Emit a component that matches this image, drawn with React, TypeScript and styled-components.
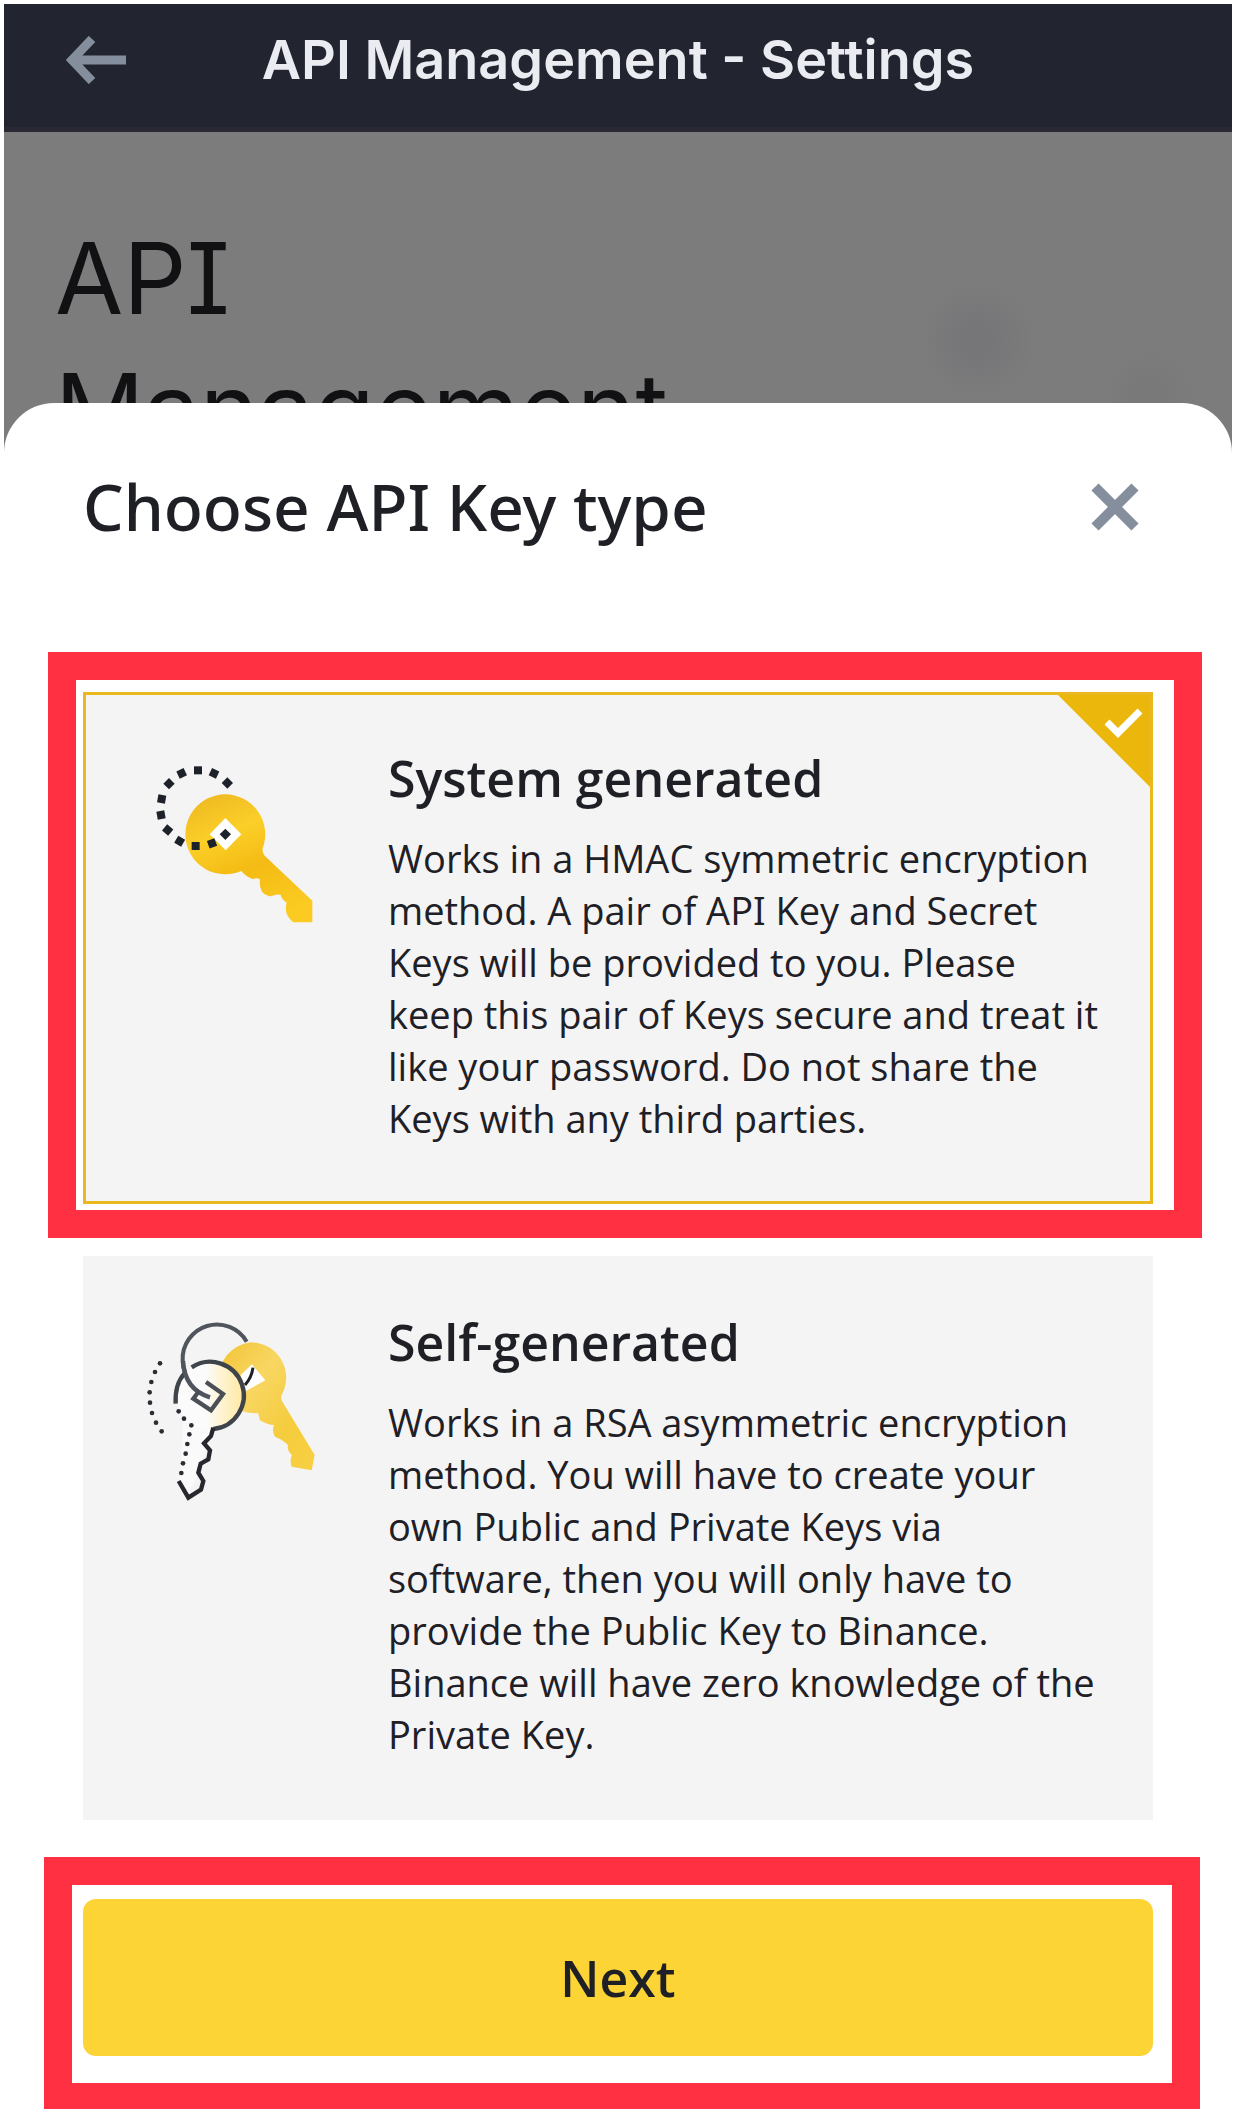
import React, { useState } from "react";
import styled, { createGlobalStyle } from "styled-components";

const GlobalStyle = createGlobalStyle`
  *, *::before, *::after { box-sizing: border-box; }
  body {
    margin: 0;
    background: #fff;
    color: #1e2026;
    font-family: "Open Sans", "Noto Sans", sans-serif;
    /* upper-case I with serifs, two-storey g */
    font-feature-settings: "ss03" 1;
  }
  h1, h2, h3, p { margin: 0; }
  button { border: 0; padding: 0; background: none; font: inherit; color: inherit; cursor: pointer; }
`;

const Page = styled.div`
  display: flex;
  flex-direction: column;
  padding: 4px;
`;

const Header = styled.header`
  display: grid;
  grid-template-columns: 1fr auto 1fr;
  align-items: center;
  height: 128px;
  padding: 0 60px 12px;
  background: #222530;
  border-bottom: 5px solid #2a2833;
`;

const HeaderTitle = styled.h1`
  font: 600 54px/64px Inter, sans-serif;
  font-feature-settings: normal;
  color: #eaecf2;
`;

const IconButton = styled.button`
  display: flex;
  justify-self: start;
  svg { display: block; }
`;

const Backdrop = styled.section`
  padding: 81px 51px 0;
  background:
    radial-gradient(circle 60px at calc(100% - 254px) 208px, #767679 20%, transparent),
    radial-gradient(circle 48px at calc(100% - 82px) 262px, #79797a 30%, transparent),
    #7c7c7c;
`;

const BackdropTitle = styled.h2`
  max-width: 640px;
  font-family: Inter, sans-serif;
  font-feature-settings: "cv08" 1;
  font-size: 99px;
  font-weight: 400;
  line-height: 131px;
  color: #111114;
`;

const Sheet = styled.form`
  position: relative;
  display: flex;
  flex-direction: column;
  margin-top: -72px;
  padding-top: 62px;
  border-radius: 50px 50px 0 0;
  background: #fff;
`;

const SheetHead = styled.div`
  display: flex;
  align-items: center;
  justify-content: space-between;
  margin-bottom: 103px;
  padding: 0 93px 0 79px;
`;

const SheetTitle = styled.h2`
  font-family: "Noto Sans", sans-serif;
  font-size: 64px;
  font-weight: 500;
  line-height: 84px;
`;

const Options = styled.div`
  display: flex;
  flex-direction: column;
  gap: 18px;
  margin-bottom: 37px;
`;

const Marked = styled.div`
  margin: 0 30px 0 44px;
  padding: 12px 21px 6px 7px;
  border: 28px solid #ff3042;
`;

const MarkedAction = styled(Marked)`
  margin: 0 32px 0 40px;
  padding: 14px 19px 27px 11px;
  border-bottom-width: 26px;
`;

const Plain = styled.div`
  margin: 0 79px;
`;

const Card = styled.label<{ $selected: boolean }>`
  position: relative;
  display: grid;
  grid-template-columns: 200px 1fr;
  column-gap: 58px;
  align-items: start;
  padding: 51px 52px 57px 44px;
  border: 3px solid ${(p) => (p.$selected ? "#eab920" : "#f4f4f4")};
  background: #f4f4f4;
  cursor: pointer;
`;

const CardArt = styled.svg`
  display: block;
  width: 200px;
  height: 200px;
`;

const CardBody = styled.span`
  display: flex;
  flex-direction: column;
  gap: 22px;
`;

const CardTitle = styled.span`
  font-size: 50px;
  font-weight: 600;
  line-height: 64px;
`;

const CardText = styled.span`
  font-size: 38px;
  line-height: 52px;
`;

const HiddenRadio = styled.input`
  position: absolute;
  width: 1px;
  height: 1px;
  margin: 0;
  opacity: 0;
`;

const Corner = styled.svg`
  position: absolute;
  top: 0;
  right: 0;
  width: 92px;
  height: 92px;
`;

const NextButton = styled.button`
  display: block;
  width: 100%;
  height: 157px;
  border-radius: 13px;
  background: #fcd436;
  font-size: 50px;
  font-weight: 600;
  line-height: 64px;
`;

const DOTS_ORBIT = [
  [292, 129, 45], [252, 100, 25], [204, 91, 0], [155, 100, -25], [117, 131, 45], [95, 177, 10],
  [93, 225, -10], [113, 270, 40], [149, 304, 30], [197, 318, 0], [246, 310, -20], [286, 283, 45],
];

const DOTS_TRAIL = [
  [90, 187], [75, 213], [64, 243], [59, 274], [60, 305], [66, 336], [78, 365], [95, 391],
  [146, 331], [162, 353], [184, 373], [178, 400], [172, 429], [167, 458], [159, 487], [154, 516],
];

const SystemKey = () => (
  <CardArt viewBox="0 18 600 600" aria-hidden="true">
    <defs>
      <linearGradient id="gold" x1="0.2" y1="0" x2="0.6" y2="1">
        <stop offset="0" stopColor="#efba22" />
        <stop offset="0.3" stopColor="#fbcf28" />
        <stop offset="0.6" stopColor="#f4bb14" />
        <stop offset="1" stopColor="#fbcb22" />
      </linearGradient>
    </defs>
    <path
      fill="url(#gold)"
      d="M285 163 A120 120 0 0 1 398 325 Q396 338 404 347 L547 482 V547 H490 Q474 533 469 518 Q466 503 470 488 Q455 478 452 464 Q436 462 424 469 Q408 468 396 455 Q387 440 390 418 Q378 412 370 418 Q350 412 334 393 A120 120 0 1 1 285 163 Z"
    />
    <path d="M286 234 L334 283 L287 331 L239 283 Z" fill="#fff" />
    {DOTS_ORBIT.map(([x, y, r]) => (
      <rect key={`${x}-${y}`} x={x - 12} y={y - 12} width="24" height="24" fill="#1d2129" transform={`rotate(${r} ${x} ${y})`} />
    ))}
  </CardArt>
);

const SelfKeys = () => (
  <CardArt viewBox="0 27 600 600" aria-hidden="true">
    <defs>
      <linearGradient id="pale" x1="0" y1="0" x2="1" y2="1">
        <stop offset="0" stopColor="#f3c435" />
        <stop offset="0.35" stopColor="#f8d662" />
        <stop offset="0.7" stopColor="#f5cc3c" />
        <stop offset="1" stopColor="#f9d044" />
      </linearGradient>
      <linearGradient id="glass" x1="0" y1="0" x2="1" y2="0">
        <stop offset="0.45" stopColor="#fbfbfb" />
        <stop offset="0.7" stopColor="#fff3cf" />
        <stop offset="1" stopColor="#ffe9a6" />
      </linearGradient>
    </defs>
    <path d="M350 122 A103 103 0 0 0 158 180 Q160 222 185 252" fill="none" stroke="#50545c" strokeWidth="12" />
    <path
      fill="url(#pale)"
      d="M362 124 A106 106 0 0 1 456 280 Q450 292 458 304 L554 462 L545 508 L485 497 Q478 478 486 462 Q470 450 474 432 Q452 412 436 408 Q424 392 432 372 Q412 372 390 358 L384 336 A106 106 0 1 1 362 124 Z"
    />
    <path d="M366 190 L406 238 L348 270 L332 252 V222 Z" fill="#fff" />
    <path d="M369 200 Q365 230 345 252" fill="none" stroke="#1e2126" strokeWidth="9" />
    <path d="M160 350 L250 380 L205 515 L175 580 L150 540 Z" fill="#fff" opacity="0.5" />
    <circle cx="238" cy="285" r="99" fill="url(#glass)" />
    <g fill="none" stroke="#3f434a" strokeWidth="13">
      <path d="M185 199 A101 101 0 1 1 250 384" />
      <path d="M163 218 Q134 250 137 308" />
      <path d="M159 180 Q164 266 240 289" stroke="#50545c" />
      <path d="M228 243 L279 279 L243 328 L190 293 L207 270" stroke="#4b4f56" />
      <path d="M250 380 L243 405 L222 427 L240 448 L235 475 L212 488 L205 515 L220 540 L213 566 L175 590 L146 540" stroke="#26282d" />
    </g>
    {DOTS_TRAIL.map(([x, y]) => (
      <circle key={`${x}-${y}`} cx={x} cy={y} r="7" fill="#2a2d33" />
    ))}
  </CardArt>
);

type KeyType = "system" | "self";

const OPTIONS: { id: KeyType; title: string; text: string; art: React.ReactNode }[] = [
  {
    id: "system",
    title: "System generated",
    text: "Works in a HMAC symmetric encryption method. A pair of API Key and Secret Keys will be provided to you. Please keep this pair of Keys secure and treat it like your password. Do not share the Keys with any third parties.",
    art: <SystemKey />,
  },
  {
    id: "self",
    title: "Self-generated",
    text: "Works in a RSA asymmetric encryption method. You will have to create your own Public and Private Keys via software, then you will only have to provide the Public Key to Binance. Binance will have zero knowledge of the Private Key.",
    art: <SelfKeys />,
  },
];

export default function App() {
  const [selected, setSelected] = useState<KeyType>("system");

  return (
    <>
      <GlobalStyle />
      <Page>
        <Header>
          <IconButton type="button" aria-label="Back">
            <svg width="64" height="48" viewBox="0 0 64 48" fill="none" stroke="#848e9c" strokeWidth="9">
              <path d="M62 24H8M28 3L8 24L28 45" />
            </svg>
          </IconButton>
          <HeaderTitle>API Management - Settings</HeaderTitle>
        </Header>

        <Backdrop>
          <BackdropTitle>API Management</BackdropTitle>
        </Backdrop>

        <Sheet onSubmit={(e) => e.preventDefault()}>
          <SheetHead>
            <SheetTitle>Choose API Key type</SheetTitle>
            <IconButton type="button" aria-label="Close">
              <svg width="48" height="48" viewBox="0 0 48 48" fill="none" stroke="#848e9c" strokeWidth="10">
                <path d="M4 4L44 44M44 4L4 44" />
              </svg>
            </IconButton>
          </SheetHead>

          <Options>
            {OPTIONS.map((o) => {
              const Wrap = o.id === "system" ? Marked : Plain;
              return (
                <Wrap key={o.id}>
                  <Card $selected={selected === o.id}>
                    <HiddenRadio
                      type="radio"
                      name="key-type"
                      value={o.id}
                      checked={selected === o.id}
                      onChange={() => setSelected(o.id)}
                    />
                    {o.art}
                    <CardBody>
                      <CardTitle>{o.title}</CardTitle>
                      <CardText>{o.text}</CardText>
                    </CardBody>
                    {selected === o.id && (
                      <Corner viewBox="0 0 92 92" aria-hidden="true">
                        <path d="M0 0H92V92Z" fill="#ecb70c" />
                        <path d="M49 27L60 38L82 16" fill="none" stroke="#fff" strokeWidth="7" />
                      </Corner>
                    )}
                  </Card>
                </Wrap>
              );
            })}
          </Options>

          <MarkedAction>
            <NextButton type="submit">Next</NextButton>
          </MarkedAction>
        </Sheet>
      </Page>
    </>
  );
}
